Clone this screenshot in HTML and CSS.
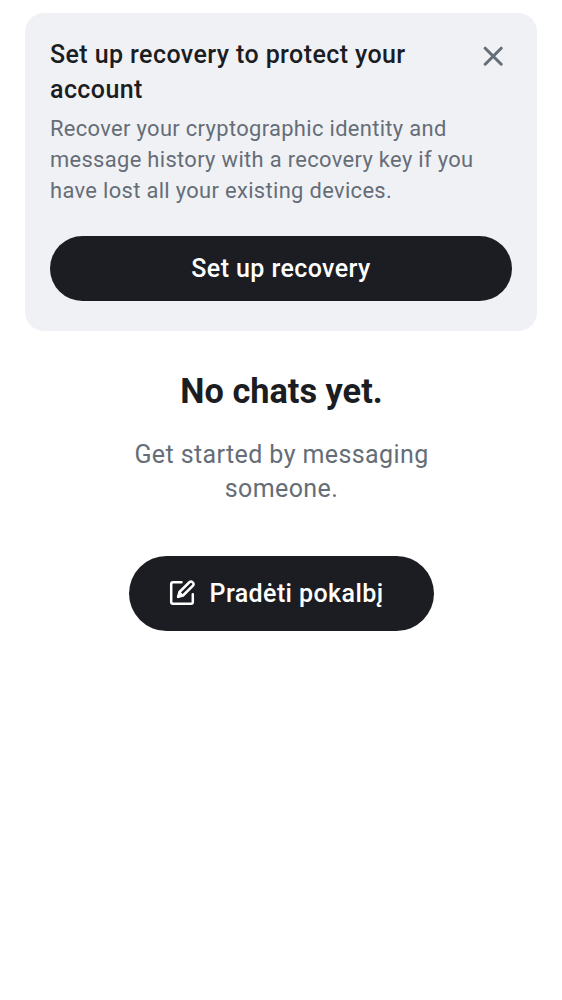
FILE: index.html
```html
<!DOCTYPE html>
<html lang="en">
<head>
<meta charset="utf-8">
<title>Chats</title>
<link rel="stylesheet" href="styles.css">
</head>
<body>
<section class="banner">
  <div class="banner-head">
    <h2 class="banner-title">Set up recovery to protect your account</h2>
    <button class="close" aria-label="Close">
      <svg width="20" height="20" viewBox="0 0 20 20" fill="none" stroke="currentColor" stroke-width="3" stroke-linecap="round"><path d="M2.200 2.200 18.200 18.200M18.200 2.200 2.200 18.200"/></svg>
    </button>
  </div>
  <p class="banner-text">Recover your cryptographic identity and message history with a recovery key if you have lost all your existing devices.</p>
  <button class="button button-wide">Set up recovery</button>
</section>
<main class="empty">
  <h1 class="empty-title">No chats yet.</h1>
  <p class="empty-text">Get started by messaging someone.</p>
  <button class="button button-start" lang="lt">
    <svg class="compose" viewBox="0 0 27 27" fill="none" stroke="currentColor" stroke-width="2.500" stroke-linecap="round" stroke-linejoin="round"><path d="M12.500 3.200H4Q2.200 3.200 2.200 5V23Q2.200 24.800 4 24.800H22Q23.800 24.800 23.800 23V15.200"/><path d="M9.100 17.900 10.500 13 20.600 3Q22 1.900 23.400 3.200L24 3.800Q25.200 5.200 24 6.600L14 16.500Z"/><path d="M9.100 17.900 10.500 13 14 16.500Z" fill="currentColor" stroke-width="1.500"/></svg>
    <span>Pradėti pokalbį</span>
  </button>
</main>
</body>
</html>
```
FILE: styles.css
```css
* { box-sizing: border-box; }
body { margin: 0; padding: 12.5px 25px; background: #fff; color: #1b1d22; font-family: Roboto, sans-serif; }
h1, h2, p { margin: 0; }
.banner { height: 318.5px; padding: 25.5px 25px 25px; border-radius: 19px; background: #f0f1f5; }
.banner-head { display: flex; justify-content: space-between; }
.banner-title { width: 380px; font-size: 25px; line-height: 34.6px; font-weight: 500; letter-spacing: .41px; }
.close { display: flex; width: 20px; height: 20px; margin: 8px 9px 0 0; padding: 0; border: 0; background: none; color: #656d77; }
.banner-text { margin-top: 5.6px; color: #656d77; font-size: 21.9px; line-height: 31.2px; letter-spacing: .34px; }
.button { display: flex; align-items: center; justify-content: center; padding: 0; border: 0; border-radius: 40px; background: #1b1d22; color: #fff; font: 500 25px/34px Roboto, sans-serif; letter-spacing: .41px; }
.button-wide { width: 100%; height: 65.5px; margin-top: 29.2px; padding-top: 2px; }
.empty { display: flex; flex-direction: column; align-items: center; padding-top: 37px; text-align: center; }
.empty-title { padding-left: 1px; font-size: 34.3px; line-height: 46px; font-weight: 700; }
.empty-text { width: 320px; margin-top: 24px; padding-left: 1px; color: #656d77; font-size: 25px; line-height: 34.4px; letter-spacing: .4px; }
.button-start { width: 305px; height: 75px; margin-top: 49.2px; gap: 13.5px; padding: 1px 9.5px 0 0; }
.compose { width: 27px; height: 27px; margin-top: -3px; }
```
